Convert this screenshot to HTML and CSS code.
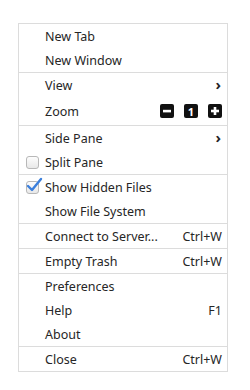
FILE: index.html
```html
<!DOCTYPE html>
<html lang="en">
<head>
    <meta charset="UTF-8">
    <title>Menu</title>
    <link rel="stylesheet" href="styles.css">
</head>
<body>
    <div class="menu">
        <div class="section">
            <div class="item"><span class="slot"></span><span class="label">New Tab</span></div>
            <div class="item"><span class="slot"></span><span class="label">New Window</span></div>
        </div>
        <div class="section">
            <div class="item"><span class="slot"></span><span class="label">View</span><span class="chevron">&#x203A;</span></div>
            <div class="item zoom"><span class="slot"></span><span class="label">Zoom</span>
                <span class="zoom-buttons">
                    <span class="zbtn"><svg width="14" height="14" viewBox="0 0 14 14"><rect x="3" y="5.8" width="8" height="2.6" fill="#fff"/></svg></span>
                    <span class="zbtn num">1</span>
                    <span class="zbtn"><svg width="14" height="14" viewBox="0 0 14 14"><rect x="3" y="5.7" width="8" height="2.6" fill="#fff"/><rect x="5.7" y="3" width="2.6" height="8" fill="#fff"/></svg></span>
                </span>
            </div>
        </div>
        <div class="section">
            <div class="item"><span class="slot"></span><span class="label">Side Pane</span><span class="chevron">&#x203A;</span></div>
            <div class="item"><span class="slot"><span class="checkbox"></span></span><span class="label">Split Pane</span></div>
        </div>
        <div class="section">
            <div class="item"><span class="slot"><span class="checkbox"></span>
                <svg class="check" width="18" height="16" viewBox="0 0 18 16"><path d="M2 9 L6 13 L15 2" fill="none" stroke="#3b7fdc" stroke-width="2.4" stroke-linecap="round" stroke-linejoin="round"/></svg>
            </span><span class="label">Show Hidden Files</span></div>
            <div class="item"><span class="slot"></span><span class="label">Show File System</span></div>
        </div>
        <div class="section">
            <div class="item"><span class="slot"></span><span class="label">Connect to Server...</span><span class="accel">Ctrl+W</span></div>
        </div>
        <div class="section">
            <div class="item"><span class="slot"></span><span class="label">Empty Trash</span><span class="accel">Ctrl+W</span></div>
        </div>
        <div class="section">
            <div class="item"><span class="slot"></span><span class="label">Preferences</span></div>
            <div class="item"><span class="slot"></span><span class="label">Help</span><span class="accel">F1</span></div>
            <div class="item"><span class="slot"></span><span class="label">About</span></div>
        </div>
        <div class="section">
            <div class="item"><span class="slot"></span><span class="label">Close</span><span class="accel">Ctrl+W</span></div>
        </div>
    </div>
</body>
</html>
```

FILE: styles.css
```css
body {
    margin: 0;
    background-color: #fff;
    font-family: 'Noto Sans', 'Open Sans', sans-serif;
    font-size: 12.5px;
    color: #262626;
}
.menu {
    margin: 23px 0 0 18px;
    width: 210px;
    box-sizing: border-box;
    border: 1px solid #dcdcdc;
    background-color: #fff;
}
.section + .section {
    border-top: 1px solid #dcdcdc;
}
.item {
    display: flex;
    align-items: center;
    height: 24px;
    padding: 0 5px 0 7px;
}
.item.zoom {
    height: 28px;
}
.slot {
    position: relative;
    width: 13px;
    height: 13px;
    margin-right: 6px;
    flex-shrink: 0;
}
.label {
    flex: 1;
    white-space: nowrap;
}
.accel {
    white-space: nowrap;
}
.chevron {
    font-weight: bold;
    font-size: 15px;
    line-height: 1;
    margin-right: 1px;
    margin-top: -2px;
}
.zoom-buttons {
    display: flex;
    gap: 10px;
}
.zbtn {
    display: flex;
    align-items: center;
    justify-content: center;
    width: 14px;
    height: 14px;
    border-radius: 2px;
    background-color: #111;
    color: #fff;
}
.zbtn.num {
    font-size: 11px;
    font-weight: bold;
    line-height: 1;
}
.checkbox {
    display: block;
    width: 13px;
    height: 13px;
    box-sizing: border-box;
    border: 1px solid #b8b8b8;
    border-radius: 3px;
    background: linear-gradient(#fdfdfd, #e8e8e8);
}
.check {
    position: absolute;
    left: 0;
    top: -4px;
}
```
